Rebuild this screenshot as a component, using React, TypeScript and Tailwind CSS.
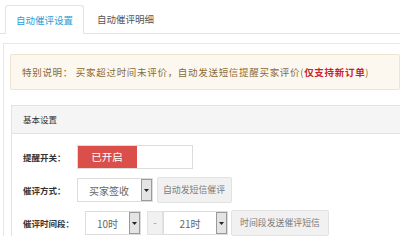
import { ReactNode } from 'react';

function Caret() {
  return (
    <span className="flex h-full w-[11px] items-center justify-center border border-[#9a9a9a] bg-[#e4e4e4]">
      <svg width="5" height="3" viewBox="0 0 5 3">
        <path d="M0 0h5L2.5 3z" fill="#222" />
      </svg>
    </span>
  );
}

function Select({ value, width }: { value: string; width: string }) {
  return (
    <div className={`flex h-[24px] ${width} items-stretch border border-[#dcdcdc] bg-white`}>
      <span className="flex flex-1 items-center justify-center text-[10px] text-[#666]">{value}</span>
      <Caret />
    </div>
  );
}

function GrayButton({ children, width }: { children: ReactNode; width: string }) {
  return (
    <div className={`flex h-[26px] ${width} items-center justify-center rounded-[2px] border border-[#e2e2e2] bg-[#f1f1f1] text-[8.9px] text-[#7a7a7a]`}>
      {children}
    </div>
  );
}

function Row({ label, children }: { label: string; children: ReactNode }) {
  return (
    <div className="flex h-[26px] items-center">
      <span className="mr-[11px] text-[8.5px] font-bold text-[#333]">{label}</span>
      {children}
    </div>
  );
}

export default function App() {
  return (
    <div className="h-[236px] w-[400px] overflow-hidden bg-white font-['Noto_Sans_CJK_SC','Noto_Sans',sans-serif]">
      <div className="flex h-[34px] items-end border-b border-[#e3e3e3] pl-[5px]">
        <div className="-mb-px flex h-[29px] w-[79px] items-center justify-center rounded-t-[3px] border border-b-0 border-[#e3e3e3] bg-white text-[9.5px] text-[#2a9ed6]">
          自动催评设置
        </div>
        <div className="ml-[13px] flex h-[28px] items-center text-[9.5px] text-[#555]">自动催评明细</div>
      </div>

      <div className="ml-[3px] mt-[9px] border-l border-t border-[#e8e8e8] pl-[6px] pt-[10px]">
        <div className="flex h-[36px] items-center rounded-[2px] border border-[#f1e5cf] bg-[#fcf8ef] pl-[11px] text-[9.5px] tracking-[0.7px] text-[#8a6a3a]">
          <span>特别说明：&nbsp;买家超过时间未评价，自动发送短信提醒买家评价(</span>
          <span className="font-bold text-[#c8232a]">仅支持新订单</span>
          <span>)</span>
        </div>

        <div className="ml-[1px] mt-[15px] border-l border-t border-[#e3e3e3]">
          <div className="flex h-[28px] items-center border-b border-[#e3e3e3] bg-[#f5f5f5] pl-[11px] text-[8.5px] text-[#333]">
            基本设置
          </div>
          <div className="flex flex-col gap-[7px] pl-[11px] pt-[10px]">
            <Row label="提醒开关：">
              <div className="flex h-[24px] w-[116px] border border-[#dcdcdc] bg-white">
                <span className="flex w-[59px] items-center justify-center bg-[#da4f4a] text-[10.5px] text-white">已开启</span>
              </div>
            </Row>
            <Row label="催评方式：">
              <Select value="买家签收" width="w-[76px]" />
              <div className="ml-[4px]">
                <GrayButton width="w-[75px]">自动发短信催评</GrayButton>
              </div>
            </Row>
            <Row label="催评时间段：">
              <Select value="10时" width="w-[56px]" />
              <div className="ml-[6px] flex h-[24px] w-[16px] items-center justify-center border border-[#e2e2e2] bg-[#f1f1f1] text-[9px] text-[#888]">
                -
              </div>
              <Select value="21时" width="w-[65px]" />
              <div className="ml-[3px]">
                <GrayButton width="w-[98px]">时间段发送催评短信</GrayButton>
              </div>
            </Row>
          </div>
        </div>
      </div>
    </div>
  );
}
